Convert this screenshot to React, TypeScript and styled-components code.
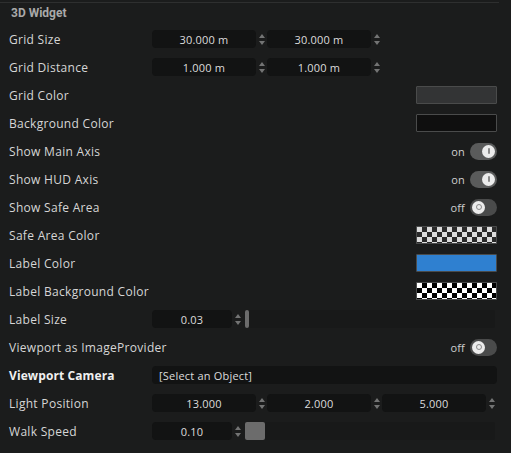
import React from "react";
import styled, { createGlobalStyle, css } from "styled-components";

const GlobalStyle = createGlobalStyle`
  html, body {
    margin: 0;
    padding: 0;
    background: #1b1c1c;
  }
  body {
    font-family: "Open Sans", "Liberation Sans", sans-serif;
  }
`;

const Panel = styled.div`
  width: 511px;
  height: 453px;
  background: #1b1c1c;
  padding-top: 2px;
  box-sizing: border-box;
  overflow: hidden;
`;

const TopRule = styled.div`
  width: 499px;
  height: 1px;
  background: #2e2f2f;
`;

const Header = styled.div`
  height: 22px;
  display: flex;
  align-items: center;
  padding-left: 11px;
  padding-bottom: 2px;
  box-sizing: border-box;
  font-family: Roboto, "Liberation Sans", sans-serif;
  font-weight: 700;
  font-size: 12px;
  color: #a9a9a9;
`;

const Row = styled.div`
  height: 28px;
  display: grid;
  grid-template-columns: 143px 345px;
  align-items: center;
  padding-left: 9px;
`;

const Label = styled.div<{ $bold?: boolean }>`
  font-size: 12px;
  letter-spacing: 0.3px;
  color: #d6d6d6;
  white-space: nowrap;
  ${(p) =>
    p.$bold &&
    css`
      font-weight: 700;
      letter-spacing: 0.1px;
      color: #f0f0f0;
    `}
`;

const Controls = styled.div<{ $end?: boolean }>`
  display: flex;
  align-items: center;
  height: 18px;
  justify-content: ${(p) => (p.$end ? "flex-end" : "flex-start")};
`;

const Field = styled.div<{ $w: number }>`
  width: ${(p) => p.$w}px;
  height: 18px;
  border-radius: 4px;
  background: #121313;
  color: #dcdcdc;
  font-size: 11px;
  letter-spacing: 0.2px;
  display: flex;
  align-items: center;
  justify-content: center;
`;

const TextField = styled(Field)`
  justify-content: flex-start;
  padding-left: 7px;
  box-sizing: border-box;
`;

const Spinner = styled.div`
  width: 11px;
  height: 18px;
  display: flex;
  flex-direction: column;
  align-items: center;
  justify-content: center;
  gap: 3px;
`;

const Arrow = styled.div<{ $down?: boolean }>`
  width: 0;
  height: 0;
  border-left: 3px solid transparent;
  border-right: 3px solid transparent;
  ${(p) =>
    p.$down
      ? css`border-top: 4px solid #737474;`
      : css`border-bottom: 4px solid #737474;`}
`;

const Track = styled.div`
  flex: 1;
  height: 18px;
  margin-left: 2px;
  margin-right: 2px;
  background: #181919;
  border-radius: 2px;
  display: flex;
  align-items: center;
`;

const Thumb = styled.div<{ $w: number }>`
  width: ${(p) => p.$w}px;
  height: 18px;
  border-radius: 2px;
  background: #6c6c6c;
`;

const Swatch = styled.div<{ $fill?: string; $checker?: "gray" | "bw" }>`
  width: 81px;
  height: 18px;
  box-sizing: border-box;
  border: 1px solid #4a4b4b;
  border-radius: 1px;
  background: ${(p) => p.$fill || "transparent"};
  ${(p) =>
    p.$checker &&
    css`
      background-color: ${p.$checker === "bw" ? "#ffffff" : "#dcdcdc"};
      background-image: linear-gradient(45deg, ${p.$checker === "bw" ? "#000" : "#2a2a2a"} 25%, transparent 25%),
        linear-gradient(-45deg, ${p.$checker === "bw" ? "#000" : "#2a2a2a"} 25%, transparent 25%),
        linear-gradient(45deg, transparent 75%, ${p.$checker === "bw" ? "#000" : "#2a2a2a"} 75%),
        linear-gradient(-45deg, transparent 75%, ${p.$checker === "bw" ? "#000" : "#2a2a2a"} 75%);
      background-size: 10px 10px;
      background-position: 0 0, 0 5px, 5px -5px, -5px 0;
    `}
`;

const ToggleText = styled.span`
  font-size: 11px;
  letter-spacing: 0.2px;
  color: #cfcfcf;
  margin-right: 5px;
`;

const ToggleTrack = styled.div<{ $on: boolean }>`
  width: 27px;
  height: 17px;
  border-radius: 9px;
  background: ${(p) => (p.$on ? "#5a5b5b" : "#4a4b4b")};
  display: flex;
  align-items: center;
  justify-content: ${(p) => (p.$on ? "flex-end" : "flex-start")};
  padding: 0 2px;
  box-sizing: border-box;
`;

const Knob = styled.div`
  width: 13px;
  height: 13px;
  border-radius: 50%;
  background: #ececec;
  display: flex;
  align-items: center;
  justify-content: center;
`;

const KnobBar = styled.div`
  width: 2px;
  height: 6px;
  background: #8a8a8a;
  border-radius: 1px;
`;

const KnobRing = styled.div`
  width: 4px;
  height: 4px;
  border-radius: 50%;
  border: 1px solid #8a8a8a;
`;

const NumberField = ({ value, w = 104 }: { value: string; w?: number }) => (
  <>
    <Field $w={w}>{value}</Field>
    <Spinner>
      <Arrow />
      <Arrow $down />
    </Spinner>
  </>
);

const Toggle = ({ on }: { on: boolean }) => (
  <>
    <ToggleText>{on ? "on" : "off"}</ToggleText>
    <ToggleTrack $on={on}>
      <Knob>{on ? <KnobBar /> : <KnobRing />}</Knob>
    </ToggleTrack>
  </>
);

const Prop = ({
  label,
  bold,
  end,
  children,
}: {
  label: string;
  bold?: boolean;
  end?: boolean;
  children?: React.ReactNode;
}) => (
  <Row>
    <Label $bold={bold}>{label}</Label>
    <Controls $end={end}>{children}</Controls>
  </Row>
);

export default function App() {
  return (
    <>
      <GlobalStyle />
      <Panel>
        <TopRule />
        <Header>3D Widget</Header>
        <Prop label="Grid Size">
          <NumberField value="30.000 m" />
          <NumberField value="30.000 m" />
        </Prop>
        <Prop label="Grid Distance">
          <NumberField value="1.000 m" />
          <NumberField value="1.000 m" />
        </Prop>
        <Prop label="Grid Color" end>
          <Swatch $fill="#333435" />
        </Prop>
        <Prop label="Background Color" end>
          <Swatch $fill="#0f0f0f" />
        </Prop>
        <Prop label="Show Main Axis" end>
          <Toggle on />
        </Prop>
        <Prop label="Show HUD Axis" end>
          <Toggle on />
        </Prop>
        <Prop label="Show Safe Area" end>
          <Toggle on={false} />
        </Prop>
        <Prop label="Safe Area Color" end>
          <Swatch $checker="gray" />
        </Prop>
        <Prop label="Label Color" end>
          <Swatch $fill="#2f80d0" />
        </Prop>
        <Prop label="Label Background Color" end>
          <Swatch $checker="bw" />
        </Prop>
        <Prop label="Label Size">
          <NumberField value="0.03" w={80} />
          <Track>
            <Thumb $w={4} />
          </Track>
        </Prop>
        <Prop label="Viewport as ImageProvider" end>
          <Toggle on={false} />
        </Prop>
        <Prop label="Viewport Camera" bold>
          <TextField $w={345}>[Select an Object]</TextField>
        </Prop>
        <Prop label="Light Position">
          <NumberField value="13.000" />
          <NumberField value="2.000" />
          <NumberField value="5.000" />
        </Prop>
        <Prop label="Walk Speed">
          <NumberField value="0.10" w={80} />
          <Track>
            <Thumb $w={20} />
          </Track>
        </Prop>
      </Panel>
    </>
  );
}
